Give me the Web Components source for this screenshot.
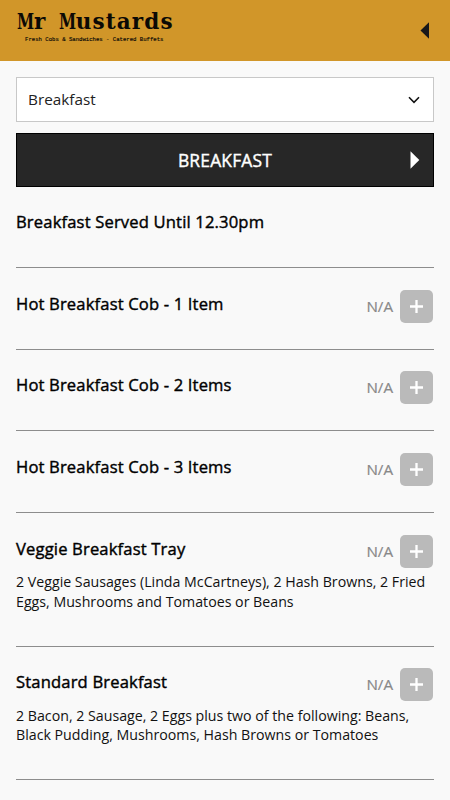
<!DOCTYPE html>
<html lang="en">
<head>
<meta charset="utf-8">
<title>Mr Mustards</title>
<style>
body{margin:0;background:#f9f9f9;color:#000;font-family:"Open Sans","Noto Sans",sans-serif}
</style>
</head>
<body>
<menu-page></menu-page>
<script>
function define(name, html) {
  const t = document.createElement('template');
  t.innerHTML = html;
  customElements.define(name, class extends HTMLElement {
    constructor() {
      super();
      this.attachShadow({ mode: 'open' }).append(t.content.cloneNode(true));
    }
  });
}

define('brand-logo', `<style>
:host{display:block;color:#0b0905;white-space:nowrap}
.name{font:bold 21.5px/24px "DejaVu Serif","DejaVu Serif Condensed",serif;letter-spacing:1.15px;word-spacing:3.5px;height:24px}
.m{display:inline-block;width:17px;transform:scaleX(.72);transform-origin:0 50%;letter-spacing:0}
.tag{font:5.63px/8px "Liberation Mono",monospace;-webkit-text-stroke:.15px #0b0905;margin:2px 0 0 8px}
</style><div class="name"><span class="m">M</span>r <span class="m">M</span>ustards</div>
<div class="tag">Fresh Cobs &amp; Sandwiches - Catered Buffets</div>`);

define('site-header', `<style>
:host{display:flex;justify-content:space-between;align-items:flex-start;box-sizing:border-box;height:61px;padding:10px 21px 0 17px;background:#d19629}
svg{display:block;margin-top:12px}
</style><brand-logo></brand-logo><svg width="9" height="17" viewBox="0 0 9 17"><path d="M9 .2v16.6L.5 8.5z" fill="#18181a"/></svg>`);

define('category-select', `<style>
:host{display:flex;justify-content:space-between;align-items:center;box-sizing:border-box;height:45px;padding:0 13px 1px 11px;border:1px solid #c8c8c8;background:#fff;font-size:15.3px;color:#222}
svg{margin-top:1px}
</style><slot></slot><svg width="12" height="8" viewBox="0 0 12 8"><path d="M1 1.3l5 5 5-5" fill="none" stroke="#111" stroke-width="1.6"/></svg>`);

define('section-bar', `<style>
:host{display:grid;grid-template-columns:23px 1fr 23px;align-items:center;box-sizing:border-box;height:54px;margin-top:11px;border:1px solid #000;background:#272727;color:#fff;font-size:17.4px;letter-spacing:.2px;-webkit-text-stroke:.4px #fff;text-align:center}
span{grid-column:2}
</style><span><slot></slot></span><svg width="10" height="18" viewBox="0 0 10 18"><path d="M.5 .3v17.4L9.3 9z" fill="#fff"/></svg>`);

define('add-button', `<style>
:host{display:flex;align-items:center;gap:7px;color:#888;font-size:15.2px;line-height:33px;-webkit-text-stroke:.2px #888}
i{display:grid;place-items:center;width:33px;height:33px;border-radius:5px;background:#bababa}
</style><span>N/A</span><i><svg width="13" height="13" viewBox="0 0 13 13"><path d="M6.5 0v13M0 6.5h13" stroke="#fff" stroke-width="2.3"/></svg></i>`);

define('menu-item', `<style>
:host{display:block;box-sizing:border-box;height:81.6px;padding-top:21.7px;border-bottom:1px solid #8d8d8d}
:host([detailed]){height:133.6px}
.row{display:flex;justify-content:space-between;height:33px;padding-right:1px}
.title{font-size:16.6px;letter-spacing:.15px;-webkit-text-stroke:.4px #000;line-height:27.4px}
:host(.lead) .title{line-height:26px}
.desc{font-size:14.2px;line-height:19.57px;color:#111;margin-top:4.3px}
</style><div class="row"><div class="title"><slot name="title"></slot></div><slot name="action"></slot></div><div class="desc"><slot></slot></div>`);

define('menu-page', `<style>
:host{display:block;height:800px;overflow:hidden}
main{display:flex;flex-direction:column;padding:16px 16px 0}
menu-item{flex:none}
.lead{height:81.2px}
</style><site-header></site-header><main>
<category-select>Breakfast</category-select>
<section-bar>BREAKFAST</section-bar>
<menu-item class="lead"><span slot="title">Breakfast Served Until 12.30pm</span></menu-item>
<menu-item><span slot="title">Hot Breakfast Cob - 1 Item</span><add-button slot="action"></add-button></menu-item>
<menu-item><span slot="title">Hot Breakfast Cob - 2 Items</span><add-button slot="action"></add-button></menu-item>
<menu-item><span slot="title">Hot Breakfast Cob - 3 Items</span><add-button slot="action"></add-button></menu-item>
<menu-item detailed><span slot="title">Veggie Breakfast Tray</span><add-button slot="action"></add-button>2 Veggie Sausages (Linda McCartneys), 2 Hash Browns, 2 Fried Eggs, Mushrooms and Tomatoes or Beans</menu-item>
<menu-item detailed><span slot="title">Standard Breakfast</span><add-button slot="action"></add-button>2 Bacon, 2 Sausage, 2 Eggs plus two of the following: Beans, Black Pudding, Mushrooms, Hash Browns or Tomatoes</menu-item>
</main>`);
</script>
</body>
</html>
